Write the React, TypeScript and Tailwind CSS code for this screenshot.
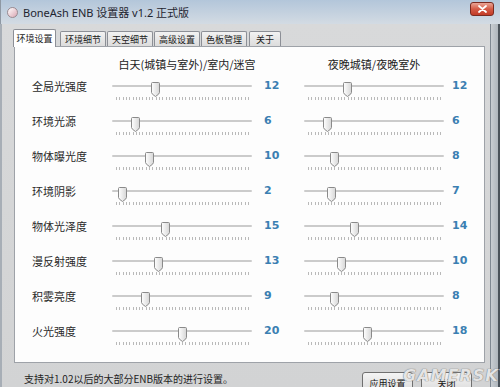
import React from "react";

const rows: { label: string; day: number; night: number }[] = [
  { label: "全局光强度", day: 12, night: 12 },
  { label: "环境光源", day: 6, night: 6 },
  { label: "物体曝光度", day: 10, night: 8 },
  { label: "环境阴影", day: 2, night: 7 },
  { label: "物体光泽度", day: 15, night: 14 },
  { label: "漫反射强度", day: 13, night: 10 },
  { label: "积雾亮度", day: 9, night: 8 },
  { label: "火光强度", day: 20, night: 18 },
];

const tabs = ["环境细节", "天空细节", "高级设置", "色板管理"];

function Thumb() {
  return (
    <svg width="9" height="15" viewBox="0 0 9 15">
      <defs>
        <linearGradient id="tg" x1="0" y1="0" x2="1" y2="0">
          <stop offset="0" stopColor="#ffffff" />
          <stop offset="1" stopColor="#d6d6d6" />
        </linearGradient>
      </defs>
      <path
        d="M1.5 0.5 H7.5 Q8.5 0.5 8.5 1.5 V10.5 Q8.5 12 4.5 14.5 Q0.5 12 0.5 10.5 V1.5 Q0.5 0.5 1.5 0.5 Z"
        fill="url(#tg)"
        stroke="#8a8a8a"
        strokeWidth="1"
      />
    </svg>
  );
}

function Slider({ value }: { value: number }) {
  const ticks = Array.from({ length: 41 }, (_, i) => i);
  const cx = 6 + 3.3 * value;
  return (
    <div className="relative w-[144px] h-[35px]">
      <div className="absolute left-[2px] right-[2px] top-[13px] h-[2px] bg-[#cbcbcb] rounded-full" />
      {ticks.map((i) => (
        <div
          key={i}
          className="absolute top-[25px] w-[1px] h-[3px] bg-[#b9b9b9]"
          style={{ left: Math.round(6 + 3.3 * i) }}
        />
      ))}
      <div className="absolute top-[10px]" style={{ left: Math.round(cx - 4.5) }}>
        <Thumb />
      </div>
    </div>
  );
}

export default function App() {
  return (
    <div className="w-[500px] h-[387px] overflow-hidden flex flex-col bg-[#d3d5d7] relative">
      {/* title bar */}
      <div className="shrink-0 h-[24px] flex items-center bg-gradient-to-b from-[#b3c6da] to-[#d3dbe3] pl-[6px] pr-[6px] border-l border-[#8e98a3]">
        <div className="w-[11px] h-[11px] rounded-full bg-gradient-to-br from-[#ffffff] to-[#d9a7b4] border border-[#9a8a90]" />
        <span className="ml-[5px] text-[11px] text-[#1f2530] font-['Noto_Sans','Noto_Sans_CJK_SC',sans-serif] leading-none">
          BoneAsh ENB 设置器 v1.2 正式版
        </span>
        <div className="ml-auto mt-[-6px] w-[24px] h-[14px] rounded-[3px] border border-[#7a2a20] bg-gradient-to-b from-[#e9a496] via-[#d45a45] to-[#c23a26] flex items-center justify-center">
          <svg width="9" height="8" viewBox="0 0 9 8">
            <path d="M1 1 L8 7 M8 1 L1 7" stroke="#ffffff" strokeWidth="1.8" strokeLinecap="round" />
          </svg>
        </div>
      </div>

      <div className="flex flex-1 min-h-0">
        <div className="flex-1 flex flex-col pl-[12px] pr-[4px] border-l-[2px] border-[#a7aeb6] bg-gradient-to-b from-[#d8d9da] to-[#d2d3d4]">
          {/* tabs */}
          <div className="shrink-0 flex items-end h-[22px] font-['Noto_Sans_CJK_SC',sans-serif] text-[9px] text-[#1a1a1a] leading-none">
            <div className="w-[43px] h-[18px] bg-white border border-b-0 border-[#8c8f96] rounded-t-[2px] flex items-center justify-center relative top-[1px] z-10 ml-[-1px]">
              环境设置
            </div>
            {tabs.map((t, i) => (
              <div
                key={t}
                className={`${i === 0 ? "ml-[4px]" : "ml-[1px]"} w-[46px] h-[15px] bg-gradient-to-b from-[#f2f2f2] to-[#dcdcdc] border border-b-0 border-[#8c8f96] rounded-t-[2px] flex items-center justify-center`}
              >
                {t}
              </div>
            ))}
            <div className="ml-[2px] w-[32px] h-[15px] bg-gradient-to-b from-[#f2f2f2] to-[#dcdcdc] border border-b-0 border-[#8c8f96] rounded-t-[2px] flex items-center justify-center">
              关于
            </div>
          </div>

          {/* panel */}
          <div className="shrink-0 w-[471px] bg-[#fdfdfd] border border-[#9ea2a8] pt-[9px] pb-[10px] pl-[17px] font-['Noto_Sans_CJK_SC',sans-serif]">
            <div className="grid grid-cols-[78px_144px_48px_144px_1fr] h-[16px] items-center text-[11px] text-[#222] leading-none">
              <div />
              <div className="flex justify-center pl-[10px] whitespace-nowrap">白天(城镇与室外)/室内/迷宫</div>
              <div />
              <div className="flex justify-center whitespace-nowrap">夜晚城镇/夜晚室外</div>
              <div />
            </div>
            {rows.map((r) => (
              <div key={r.label} className="grid grid-cols-[78px_144px_48px_144px_1fr] h-[35px]">
                <div className="text-[11px] text-[#2a2a2a] leading-none pt-[9px] whitespace-nowrap">{r.label}</div>
                <Slider value={r.day} />
                <div className="pl-[10px] pt-[8px] text-[11px] font-bold text-[#3b7fb2] leading-none font-['DejaVu_Sans',sans-serif]">
                  {r.day}
                </div>
                <Slider value={r.night} />
                <div className="pl-[6px] pt-[8px] text-[11px] font-bold text-[#3b7fb2] leading-none font-['DejaVu_Sans',sans-serif]">
                  {r.night}
                </div>
              </div>
            ))}
          </div>

          {/* footer */}
          <div className="shrink-0 flex items-start mt-[9px] font-['Noto_Sans_CJK_SC',sans-serif]">
            <div className="ml-[10px] mt-[1px] text-[10px] leading-[12px] text-[#1e1e1e] whitespace-nowrap">
              支持对1.02以后的大部分ENB版本的进行设置。
            </div>
            <div className="ml-auto mr-[14px] flex gap-[8px]">
              <div className="w-[51px] h-[23px] rounded-[3px] border border-[#707070] bg-gradient-to-b from-[#f4f4f4] to-[#d8d8d8] flex items-start justify-center pt-[6px] text-[9px] text-[#111] leading-none">
                应用设置
              </div>
              <div className="w-[51px] h-[23px] rounded-[3px] border border-[#707070] bg-gradient-to-b from-[#f4f4f4] to-[#d8d8d8] flex items-start justify-center pt-[6px] text-[9px] text-[#111] leading-none">
                关闭
              </div>
            </div>
          </div>
        </div>
        <div className="w-[10px] border-l border-[#7f8892] bg-gradient-to-r from-[#c8cdd2] to-[#aeb5bc] border-r-[2px] border-r-[#4a525a]" />
      </div>

      <div className="absolute left-[403px] top-[368px] text-[16px] font-bold italic text-white/80 tracking-[1px] font-['DejaVu_Sans',sans-serif] [text-shadow:0_0_1px_#777,0_0_1px_#777] leading-none">
        GAMERSKY
      </div>
    </div>
  );
}
